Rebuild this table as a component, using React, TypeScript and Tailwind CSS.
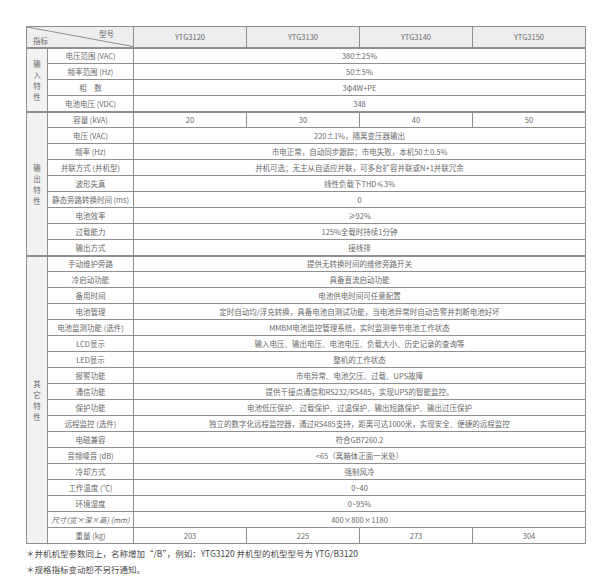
import React from "react";

type Row = { label: string; values: string[]; italic?: boolean };

const groups: { name: string; rows: Row[] }[] = [
  {
    name: "输入特性",
    rows: [
      { label: "电压范围 (VAC)", values: ["380±25%"] },
      { label: "频率范围 (Hz)", values: ["50±5%"] },
      { label: "相　数", values: ["3φ4W+PE"] },
      { label: "电池电压 (VDC)", values: ["348"] },
    ],
  },
  {
    name: "输出特性",
    rows: [
      { label: "容量 (kVA)", values: ["20", "30", "40", "50"] },
      { label: "电压 (VAC)", values: ["220±1%，隔离变压器输出"] },
      { label: "频率 (Hz)", values: ["市电正常，自动同步跟踪；市电失败，本机50±0.5%"] },
      { label: "并联方式 (并机型)", values: ["并机可选；无主从自适应并联，可多台扩容并联或N+1并联冗余"] },
      { label: "波形失真", values: ["线性负载下THD≤3%"] },
      { label: "静态旁路转换时间 (ms)", values: ["0"] },
      { label: "电池效率", values: ["≥92%"] },
      { label: "过载能力", values: ["125%全载时持续1分钟"] },
      { label: "输出方式", values: ["接线排"] },
    ],
  },
  {
    name: "其它特性",
    rows: [
      { label: "手动维护旁路", values: ["提供无转换时间的维修旁路开关"] },
      { label: "冷启动功能", values: ["具备直流启动功能"] },
      { label: "备用时间", values: ["电池供电时间可任意配置"] },
      { label: "电池管理", values: ["定时自动均/浮充转换，具备电池自测试功能，当电池异常时自动告警并判断电池好坏"] },
      { label: "电池监测功能 (选件)", values: ["MMBM电池监控管理系统，实时监测单节电池工作状态"] },
      { label: "LCD显示", values: ["输入电压、输出电压、电池电压、负载大小、历史记录的查询等"] },
      { label: "LED显示", values: ["整机的工作状态"] },
      { label: "报警功能", values: ["市电异常、电池欠压、过载、UPS故障"] },
      { label: "通信功能", values: ["提供干接点通信和RS232/RS485，实现UPS的智能监控。"] },
      { label: "保护功能", values: ["电池低压保护、过载保护、过温保护、输出短路保护、输出过压保护"] },
      { label: "远程监控 (选件)", values: ["独立的数字化远程监控器，通过RS485支持，距离可达1000米，实现安全、便捷的远程监控"] },
      { label: "电磁兼容", values: ["符合GB7260.2"] },
      { label: "音频噪音 (dB)", values: ["<65（离箱体正面一米处）"] },
      { label: "冷却方式", values: ["强制风冷"] },
      { label: "工作温度 (℃)", values: ["0~40"] },
      { label: "环境湿度", values: ["0~95%"] },
      { label: "尺寸(宽×深×高) (mm)", values: ["400×800×1180"], italic: true },
      { label: "重量 (kg)", values: ["203", "225", "273", "304"] },
    ],
  },
];

const cell = "border border-[#8f8f8f] text-center align-middle p-0 whitespace-nowrap";

export default function App() {
  return (
    <div
      className="w-[600px] h-[584px] bg-white pt-[26px] pl-[26px] text-[#6a6a6a]"
      style={{ fontFamily: '"Noto Sans CJK SC", "Noto Sans", sans-serif' }}
    >
      <table className="border-collapse table-fixed w-[559px] text-[7.5px] leading-none">
        <colgroup>
          <col className="w-[21px]" />
          <col className="w-[86px]" />
          <col className="w-[113px]" />
          <col className="w-[113px]" />
          <col className="w-[113px]" />
          <col className="w-[113px]" />
        </colgroup>
        <tbody>
          <tr className="h-[21px] bg-[#eeeeee]">
            <td colSpan={2} className={`${cell} relative`}>
              <svg className="absolute inset-0 w-full h-full" viewBox="0 0 100 100" preserveAspectRatio="none">
                <line x1="0" y1="0" x2="100" y2="100" stroke="#8f8f8f" strokeWidth="1" vectorEffect="non-scaling-stroke" />
              </svg>
              <span className="absolute right-[19px] top-[3px]">型号</span>
              <span className="absolute left-[6px] bottom-[2px]">指标</span>
            </td>
            {["YTG3120", "YTG3130", "YTG3140", "YTG3150"].map((m) => (
              <td key={m} className={cell}>
                {m}
              </td>
            ))}
          </tr>
          {groups.map((g) =>
            g.rows.map((r, i) => (
              <tr key={g.name + r.label} className="h-[16px]">
                {i === 0 && (
                  <td
                    rowSpan={g.rows.length}
                    className={`${cell} bg-[#f2f2f2] ${i === 0 ? "border-t-2" : ""}`}
                  >
                    <div className="flex flex-col items-center leading-[11px]">
                      {g.name.split("").map((c, k) => (
                        <span key={k}>{c}</span>
                      ))}
                    </div>
                  </td>
                )}
                <td className={`${cell} ${i === 0 ? "border-t-2" : ""} ${r.italic ? "italic" : ""}`}>{r.label}</td>
                {r.values.length === 1 ? (
                  <td colSpan={4} className={`${cell} ${i === 0 ? "border-t-2" : ""}`}>
                    {r.values[0]}
                  </td>
                ) : (
                  r.values.map((v, k) => (
                    <td key={k} className={`${cell} ${i === 0 ? "border-t-2" : ""}`}>
                      {v}
                    </td>
                  ))
                )}
              </tr>
            ))
          )}
        </tbody>
      </table>
      <div className="text-[8.5px] leading-[16px] text-[#4a4a4a] mt-[1px]">
        <p>＊并机机型参数同上，名称增加“/B”，例如：YTG3120 并机型的机型型号为 YTG/B3120</p>
        <p>＊规格指标变动恕不另行通知。</p>
      </div>
    </div>
  );
}
